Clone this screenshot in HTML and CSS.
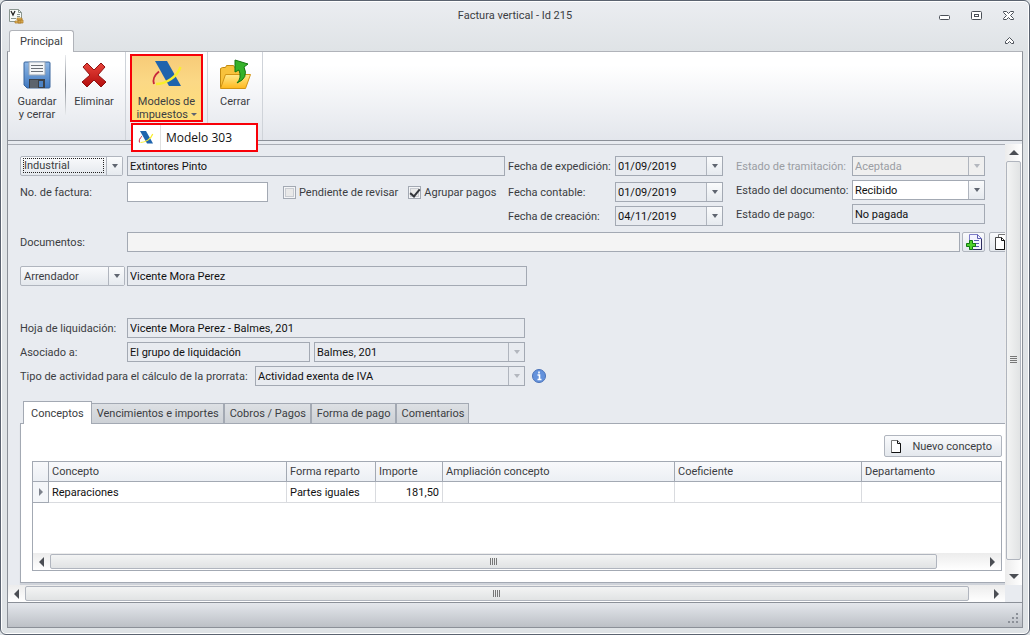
FILE: index.html
```html
<!DOCTYPE html>
<html lang="es">
<head>
  <meta charset="UTF-8" />
  <title>Factura vertical - Id 215</title>
  <link rel="stylesheet" href="styles.css">
</head>
<body>
  <svg class="defs" aria-hidden="true">
    <linearGradient id="gBlue" x1="0" y1="0" x2="0" y2="1"><stop offset="0" stop-color="#8fb8e6"/><stop offset="1" stop-color="#3f78c0"/></linearGradient>
    <linearGradient id="gFolder" x1="0" y1="0" x2="0" y2="1"><stop offset="0" stop-color="#ffe98c"/><stop offset="1" stop-color="#ffb81c"/></linearGradient>
    <linearGradient id="gRed" x1="0" y1="0" x2="0" y2="1"><stop offset="0" stop-color="#e8453c"/><stop offset="1" stop-color="#b30d0d"/></linearGradient>
    <symbol id="aeat" viewBox="0 0 32 32">
      <path d="M8 12.500C3.500 16 1.500 21 3 25" fill="none" stroke="#c8283c" stroke-width="2"/>
      <path d="M4 2h12l14 25H18z" fill="#1f64ad"/>
      <path d="M5 25C15 25 26 18 29.500 8" fill="none" stroke="#f9ee2c" stroke-width="2.400"/>
    </symbol>
    <symbol id="page" viewBox="0 0 10 13">
      <path d="M.5.500h6l3 3v9h-9z" fill="#fff" stroke="#777"/>
      <path d="M6.500.500v3h3v9h-9" fill="none" stroke="#111"/>
    </symbol>
  </svg>

  <div class="window">
    <header class="titlebar">
      <svg class="app-icon" viewBox="0 0 16 16">
        <path d="M1.500 1.500h9l3 3v9h-12z" fill="#f7faf8" stroke="#8a9690"/>
        <path d="M10.500 1.500v3h3M9 6.500h3M9 8.500h3M3 10.500h5" fill="none" stroke="#8a9690"/>
        <path d="M3 3l2 4 2-4" fill="none" stroke="#222" stroke-width="1.300"/>
        <path d="M9 10h5v2H9zM7 13h6v2H7zM10 12h5v3h-5z" fill="#e9bd62" stroke="#a87420" stroke-width=".7"/>
      </svg>
      <h1>Factura vertical - Id 215</h1>
      <div class="window-buttons">
        <button aria-label="Minimizar"><svg viewBox="0 0 13 11"><rect x="1.500" y="5.500" width="10" height="4" rx="1" fill="#fff" stroke="#4b5058"/></svg></button>
        <button aria-label="Maximizar"><svg viewBox="0 0 13 11"><rect x="1.500" y="1.500" width="10" height="8" rx="1" fill="#fff" stroke="#4b5058"/><rect x="4.500" y="4.500" width="4" height="2" fill="#fff" stroke="#4b5058"/></svg></button>
        <button aria-label="Cerrar ventana"><svg viewBox="0 0 13 11"><path d="M1.500 1.500h3l2 2 2-2h3v1L8.500 5.500l3 3v1h-3l-2-2-2 2h-3v-1l3-3-3-3z" fill="#fff" stroke="#4b5058"/></svg></button>
      </div>
    </header>

    <div class="ribbon-tabs">
      <button class="ribbon-tab">Principal</button>
      <button class="collapse" aria-label="Contraer"><svg viewBox="0 0 11 9"><path d="M1.500 5.500l4-4 4 4v2h-2l-2-2-2 2h-2z" fill="#fff" stroke="#4b5058"/></svg></button>
    </div>

    <nav class="ribbon">
      <div class="ribbon-group ribbon-group-edit">
        <button class="ribbon-btn">
          <svg viewBox="0 0 32 32">
            <path d="M4 3h24q1 0 1 1v24q0 1-1 1H6l-3-3V4q0-1 1-1z" fill="url(#gBlue)" stroke="#38659c"/>
            <path d="M8 3h16v13H8z" fill="#f4f6f8" stroke="#9aa6b4"/>
            <path d="M10 6.500h12M10 9.500h12M10 12.500h12" stroke="#6c7178"/>
            <path d="M8 20h16v9H8z" fill="#3a4048"/>
            <path d="M9 21h8v8H9z" fill="#5b636d"/>
            <path d="M18 22h4v6h-4z" fill="#4d83c4"/>
          </svg>
          Guardar<br>y cerrar
        </button>
        <span class="ribbon-sep"></span>
        <button class="ribbon-btn">
          <svg viewBox="0 0 32 32"><path d="M9 4l7 7 7-7 4 4-7 8 8 7-5 5-7-7-7 7-5-5 8-7-7-8z" fill="url(#gRed)" stroke="#8e1212"/></svg>
          Eliminar
        </button>
      </div>
      <div class="ribbon-group ribbon-group-taxes">
        <div class="dropdown">
          <button class="ribbon-btn active" aria-expanded="true">
            <svg viewBox="0 0 32 32"><use href="#aeat"/></svg>
            Modelos de<br>impuestos <i class="caret"></i>
          </button>
          <div class="dropdown-menu">
            <button class="menu-item"><span class="menu-icon"><svg viewBox="0 0 32 32"><use href="#aeat"/></svg></span>Modelo 303</button>
          </div>
        </div>
      </div>
      <div class="ribbon-group">
        <button class="ribbon-btn">
          <svg viewBox="0 0 32 32">
            <path d="M1.500 28.500V9.500l2-1h3l1-2h7l2 3h9v19z" fill="#f8c23c" stroke="#c28a10"/>
            <path d="M1.500 29.500l5-14h25l-5 14z" fill="url(#gFolder)" stroke="#d29414"/>
            <path d="M18 24q5-5 2-13l-4 2V1l13 4-4 3q5 11-7 16z" fill="#35b22a" stroke="#167512"/>
          </svg>
          Cerrar
        </button>
      </div>
    </nav>

    <main class="workspace">
      <div class="form">
        <div class="form-top">
          <div class="col col-main">
            <div class="row">
              <div class="split split-focus"><button class="split-main">Industrial</button><button class="drop" aria-label="Elegir tipo"></button></div>
              <input class="field grow" type="text" value="Extintores Pinto" aria-label="Industrial" readonly>
            </div>
            <div class="row">
              <label class="label-main" for="numFactura">No. de factura:</label>
              <input class="field white invoice-number" type="text" id="numFactura">
              <label class="check check-first"><input type="checkbox">Pendiente de revisar</label>
              <label class="check"><input type="checkbox" checked>Agrupar pagos</label>
            </div>
          </div>
          <div class="col col-dates">
            <div class="row">
              <label for="fExpedicion">Fecha de expedición:</label>
              <div class="combo"><input type="text" id="fExpedicion" value="01/09/2019"><button class="drop" aria-label="Calendario"></button></div>
            </div>
            <div class="row">
              <label for="fContable">Fecha contable:</label>
              <div class="combo"><input type="text" id="fContable" value="01/09/2019"><button class="drop" aria-label="Calendario"></button></div>
            </div>
            <div class="row">
              <label for="fCreacion">Fecha de creación:</label>
              <div class="combo"><input type="text" id="fCreacion" value="04/11/2019"><button class="drop" aria-label="Calendario"></button></div>
            </div>
          </div>
          <div class="col col-status">
            <div class="row off">
              <label for="eTramitacion">Estado de tramitación:</label>
              <div class="combo disabled"><select id="eTramitacion" disabled><option>Aceptada</option></select><span class="drop"></span></div>
            </div>
            <div class="row">
              <label for="eDocumento">Estado del documento:</label>
              <div class="combo white"><select id="eDocumento"><option>Recibido</option></select><span class="drop"></span></div>
            </div>
            <div class="row">
              <label for="ePago">Estado de pago:</label>
              <input class="field grow" type="text" id="ePago" value="No pagada" readonly>
            </div>
          </div>
        </div>

        <div class="row row-docs">
          <label class="label-main" for="documentos">Documentos:</label>
          <input class="field grow pale" type="text" id="documentos">
          <button class="icon-btn" aria-label="Añadir documento">
            <svg viewBox="0 0 16 16">
              <path d="M3.500.500h8l4 4v11h-12z" fill="#f4f4ff" stroke="#7d7dc8"/>
              <path d="M11.500.500v4h4M8 6.500h5M9 9.500h4M9 12.500h4" fill="none" stroke="#5b5bb0"/>
              <path d="M15.500 5v10.500H7" fill="none" stroke="#2c2c5e"/>
              <path d="M3.500 6.500h3v3h3v3h-3v3h-3v-3h-3v-3h3z" fill="#4fd02c" stroke="#127a10"/>
            </svg>
          </button>
          <button class="icon-btn icon-btn-last" aria-label="Copiar documento">
            <svg viewBox="0 0 16 16">
              <path d="M5.500.500h7l3 3v9h-10z" fill="#fff" stroke="#777"/>
              <path d="M2.500 3.500h6l3 3v9h-9z" fill="#fff" stroke="#444"/>
              <path d="M8.500 3.500v3h3v9h-9" fill="none" stroke="#111"/>
            </svg>
          </button>
        </div>

        <div class="row row-landlord">
          <div class="split split-wide"><button class="split-main">Arrendador</button><button class="drop" aria-label="Elegir tipo"></button></div>
          <input class="field landlord" type="text" value="Vicente Mora Perez" aria-label="Arrendador" readonly>
        </div>

        <div class="settlement">
          <div class="row">
            <label class="label-main" for="hoja">Hoja de liquidación:</label>
            <input class="field grow" type="text" id="hoja" value="Vicente Mora Perez - Balmes, 201" readonly>
          </div>
          <div class="row">
            <label class="label-main" for="asociado">Asociado a:</label>
            <input class="field group" type="text" id="asociado" value="El grupo de liquidación" readonly>
            <div class="combo muted"><select aria-label="Finca"><option>Balmes, 201</option></select><span class="drop"></span></div>
          </div>
          <div class="row">
            <label class="label-activity" for="actividad">Tipo de actividad para el cálculo de la prorrata:</label>
            <div class="combo muted"><select id="actividad"><option>Actividad exenta de IVA</option></select><span class="drop"></span></div>
            <svg class="info" viewBox="0 0 14 14"><circle cx="7" cy="7" r="6.500" fill="#6492dc" stroke="#4a72b8"/><path d="M7 2.500v2M5.500 6H7.500v4.500M5.500 10.500h4" fill="none" stroke="#fff" stroke-width="1.600"/></svg>
          </div>
        </div>

        <div class="tabs" role="tablist">
          <button class="tab selected" role="tab">Conceptos</button>
          <button class="tab" role="tab">Vencimientos e importes</button>
          <button class="tab" role="tab">Cobros / Pagos</button>
          <button class="tab" role="tab">Forma de pago</button>
          <button class="tab" role="tab">Comentarios</button>
        </div>
        <section class="panel">
          <button class="new-btn"><svg viewBox="0 0 10 13"><use href="#page"/></svg>Nuevo concepto</button>
          <div class="grid">
            <table class="concepts">
              <colgroup><col class="c-mark"><col class="c-concept"><col class="c-form"><col class="c-amount"><col class="c-ext"><col class="c-coef"><col></colgroup>
              <thead>
                <tr><th></th><th>Concepto</th><th>Forma reparto</th><th>Importe</th><th>Ampliación concepto</th><th>Coeficiente</th><th>Departamento</th></tr>
              </thead>
              <tbody>
                <tr><td class="mark"><i class="arrow right"></i></td><td>Reparaciones</td><td>Partes iguales</td><td class="num">181,50</td><td></td><td></td><td></td></tr>
              </tbody>
            </table>
            <div class="scroll-h">
              <button class="scroll-arrow" aria-label="Izquierda"><i class="arrow left"></i></button>
              <div class="track"><div class="thumb thumb-grid"><i class="grip"></i></div></div>
              <button class="scroll-arrow" aria-label="Derecha"><i class="arrow right"></i></button>
            </div>
          </div>
        </section>
      </div>
      <div class="scroll-v">
        <button class="scroll-arrow" aria-label="Arriba"><i class="arrow up"></i></button>
        <div class="track"><div class="thumb"><i class="grip"></i></div></div>
        <button class="scroll-arrow" aria-label="Abajo"><i class="arrow down"></i></button>
      </div>
      <div class="scroll-h">
        <button class="scroll-arrow" aria-label="Izquierda"><i class="arrow left"></i></button>
        <div class="track"><div class="thumb"><i class="grip"></i></div></div>
        <button class="scroll-arrow" aria-label="Derecha"><i class="arrow right"></i></button>
      </div>
    </main>

    <footer class="statusbar">
      <svg class="resize" viewBox="0 0 12 12"><path d="M8 0h2v2H8zM4 4h2v2H4zM8 4h2v2H8zM0 8h2v2H0zM4 8h2v2H4zM8 8h2v2H8z" fill="#8b9098"/></svg>
    </footer>
  </div>
</body>
</html>
```

FILE: styles.css
```css
* {
  box-sizing: border-box;
}
body {
  margin: 0;
  background-color: #dfe3e6;
  font-family: Tahoma, Roboto, sans-serif;
  font-size: 11px;
  line-height: 13px;
  color: #3b3d42;
}
button,
input,
select {
  font: inherit;
  color: inherit;
  margin: 0;
  padding: 0;
  border: 0;
  border-radius: 0;
  background: none;
  min-width: 0;
}
select {
  appearance: none;
}
svg {
  display: block;
}
.defs {
  position: absolute;
  width: 0;
  height: 0;
}

/* window frame */
.window {
  display: flex;
  flex-direction: column;
  min-height: 100vh;
  padding: 0 6px 6px;
  border: 1px solid #5b6370;
  border-radius: 6px;
  box-shadow: inset 0 0 0 1px #fff;
  background: linear-gradient(#ebedf1, #dfe3e6 50px);
}
.titlebar {
  display: grid;
  grid-template-columns: 90px 1fr 90px;
  align-items: center;
  height: 29px;
}
.titlebar h1 {
  margin: 0;
  font-size: 11px;
  font-weight: normal;
  text-align: center;
}
.app-icon {
  width: 16px;
  height: 16px;
  margin-left: 1px;
}
.window-buttons {
  display: flex;
  justify-content: flex-end;
  gap: 19px;
  padding-right: 8px;
}
.window-buttons svg {
  width: 13px;
  height: 11px;
}
.ribbon-tabs {
  display: flex;
  justify-content: space-between;
  padding: 0 8px 0 2px;
}
.ribbon-tab {
  position: relative;
  z-index: 1;
  height: 22px;
  margin-bottom: -1px;
  padding: 0 10px;
  border: 1px solid #b0b3b9;
  border-bottom: 0;
  border-radius: 3px 3px 0 0;
  background-color: #fff;
}
.collapse svg {
  width: 11px;
  height: 9px;
}

/* ribbon */
.ribbon {
  display: flex;
  height: 90px;
  border: 1px solid #8b9098;
  border-top-color: #b0b3b9;
  background: linear-gradient(#fff 15%, #e3e6ec);
}
.ribbon-group {
  display: flex;
  align-items: flex-start;
  padding-top: 3px;
  border-right: 1px solid #cfd3d9;
}
.ribbon-group-edit {
  padding-left: 2px;
  padding-right: 4px;
}
.ribbon-group-taxes {
  padding: 2px 4px;
}
.ribbon-btn {
  width: 54px;
  padding: 4px 0 0;
  text-align: center;
}
.ribbon-btn svg {
  width: 32px;
  height: 32px;
  margin: 0 auto 4px;
}
.ribbon-sep {
  width: 1px;
  height: 60px;
  margin: 0 1px;
  background: linear-gradient(#e9ebee, #7d828a, #e9ebee);
}
.dropdown {
  position: relative;
}
.ribbon-btn.active {
  width: 73px;
  height: 68px;
  padding: 3px 0 0;
  border: 2px solid #f80008;
  background: linear-gradient(#f7cb78, #fbd885 40%, #ffe07a);
}
.caret {
  display: inline-block;
  margin-bottom: 2px;
  border: 3px solid transparent;
  border-top-color: #5f6570;
  border-bottom: 0;
}
.dropdown-menu {
  position: absolute;
  z-index: 2;
  top: 69px;
  left: 1px;
  width: 127px;
  border: 2px solid #f80008;
  background-color: #fff;
}
.menu-item {
  display: flex;
  align-items: center;
  width: 100%;
  height: 25px;
  font-family: "Segoe UI", "Open Sans", sans-serif;
  font-size: 12px;
  color: #111;
}
.menu-icon {
  display: flex;
  align-items: center;
  height: 25px;
  width: 28px;
  margin-right: 5px;
  padding-left: 5px;
  border-right: 1px solid #e0e0e0;
}
.menu-icon svg {
  width: 16px;
  height: 16px;
}

/* workspace */
.workspace {
  display: grid;
  grid-template-columns: 1fr 17px;
  grid-template-rows: 1fr 17px;
  flex: 1;
  padding-top: 3px;
  border: 1px solid #8b9098;
  border-top: 0;
  border-bottom: 0;
  background-color: #e8ebf0;
}
.form {
  display: flex;
  flex-direction: column;
  min-width: 0;
  overflow: hidden;
  padding: 11px 0 2px 12px;
  border-top: 1px solid #a9adb5;
}
.form-top {
  display: flex;
  padding-right: 20px;
}
.col,
.settlement {
  display: flex;
  flex-direction: column;
  gap: 4px;
}
.col-main {
  flex: 1;
  gap: 6px;
  min-width: 0;
}
.col-dates {
  width: 215px;
  margin: 0 13px 0 3px;
}
.col-dates .row:first-child {
  margin-bottom: 2px;
}
.col-status {
  width: 249px;
}
.row {
  display: flex;
  align-items: center;
}
.label-main,
.col-dates .row > label {
  flex: 0 0 107px;
}
.col-status .row > label {
  flex: 0 0 116px;
}
.label-activity {
  flex: 0 0 235px;
}
.field,
.combo {
  height: 20px;
  border: 1px solid #a3a9b3;
  color: #111;
}
.field {
  padding: 0 2px;
}
.grow {
  flex: 1;
}
.white {
  background-color: #fff;
}
.pale {
  background-color: #f4f4f4;
}
.combo {
  display: flex;
  flex: 1;
  min-width: 0;
}
.combo input,
.combo select {
  flex: 1;
  padding: 0 2px;
}
.drop {
  display: flex;
  flex: 0 0 16px;
  align-items: center;
  justify-content: center;
  border-left: 1px solid #b0b5be;
  background: linear-gradient(#fafbfc, #e6eaef);
}
.drop::before {
  content: "";
  border: 3px solid transparent;
  border-top: 4px solid #5f6570;
  border-bottom: 0;
}
.muted .drop,
.disabled .drop {
  background: none;
}
.muted .drop::before,
.disabled .drop::before {
  border-top-color: #b3b7be;
}
.off,
.disabled,
.disabled select {
  color: #9a9da3;
  opacity: 1;
}
.disabled {
  background-color: #efefef;
}
.split {
  display: flex;
  width: 103px;
  height: 20px;
  margin-right: 4px;
  border: 1px solid #b0b5be;
  border-radius: 2px;
  background: linear-gradient(#f9fafc, #e4e8ed);
}
.split-wide {
  width: 105px;
  margin-right: 2px;
}
.split-main {
  flex: 1;
  padding-left: 3px;
  text-align: left;
}
.split-focus .split-main {
  margin: 1px 2px 2px;
  padding-left: 0;
  border: 1px dotted #222;
}
.invoice-number {
  width: 141px;
}
.check {
  display: flex;
  align-items: center;
  gap: 3px;
  margin-left: 10px;
}
.check-first {
  margin-left: 15px;
}
.check input {
  appearance: none;
  display: grid;
  place-items: center;
  width: 13px;
  height: 13px;
  border: 1px solid #a3a9b3;
  box-shadow: inset 0 0 0 1px #f4f5f7, inset 0 0 0 2px #c9ccd2;
  background-color: #e9e9e9;
}
.check input:checked::before {
  content: "";
  width: 4px;
  height: 8px;
  border: solid #33363b;
  border-width: 0 2px 2px 0;
  transform: rotate(40deg);
}
.row-docs {
  margin: 6px -7px 0 0;
}
.icon-btn {
  width: 23px;
  height: 20px;
  margin-left: 2px;
  padding-left: 3px;
  border: 1px solid #b0b5be;
  border-radius: 2px;
  background: linear-gradient(#f9fafc, #e4e8ed);
}
.icon-btn-last {
  margin-left: 4px;
}
.icon-btn svg {
  width: 16px;
  height: 16px;
}
.row-landlord {
  margin-top: 14px;
}
.landlord {
  width: 400px;
}
.settlement {
  width: 505px;
  margin-top: 32px;
}
.group {
  width: 183px;
  margin-right: 4px;
}
.info {
  width: 14px;
  height: 14px;
  margin: 0 -21px 0 7px;
}

/* tabs and grid */
.tabs {
  display: flex;
  align-items: flex-end;
  margin-top: 15px;
  padding-left: 3px;
}
.tab {
  height: 20px;
  padding: 0 5px;
  border: 1px solid #a3a9b3;
  border-bottom: 0;
  background: linear-gradient(#dde0e4, #cdd1d6);
}
.tab + .tab {
  padding: 0 4px 0 5px;
}
.tab.selected {
  position: relative;
  height: 23px;
  margin: 0 -1px -1px 0;
  padding: 0 7px;
  background: #fff;
}
.panel {
  display: flex;
  flex: 1;
  flex-direction: column;
  padding: 11px 3px 11px 11px;
  border: 1px solid #a3a9b3;
  border-right: 0;
  box-shadow: 0 2px 1px #cfd3da;
  background-color: #fff;
}
.new-btn {
  display: flex;
  align-items: center;
  align-self: flex-end;
  gap: 11px;
  height: 22px;
  margin-bottom: 4px;
  padding: 0 9px 0 6px;
  border: 1px solid #b0b5be;
  border-radius: 2px;
  background: linear-gradient(#f9fafc, #e4e8ed);
}
.new-btn svg {
  width: 10px;
  height: 13px;
}
.grid {
  display: flex;
  flex: 1;
  flex-direction: column;
  justify-content: space-between;
  border: 1px solid #a3a9b3;
}
.concepts {
  width: 100%;
  table-layout: fixed;
  border-spacing: 0;
}
.c-mark { width: 16px; }
.c-concept { width: 238px; }
.c-form { width: 89px; }
.c-amount { width: 67px; }
.c-ext { width: 232px; }
.c-coef { width: 187px; }
.concepts th,
.concepts td {
  height: 21px;
  padding: 0 3px;
  border: solid #d9dbdf;
  border-width: 0 1px 1px 0;
  text-align: left;
  color: #111;
}
.concepts th {
  height: 20px;
  border-color: #a3a9b3;
  background: linear-gradient(#f8f9fb, #eceff4);
  font-weight: normal;
  color: #3b3d42;
}
.concepts th:last-child,
.concepts td:last-child {
  border-right: 0;
}
.concepts .mark {
  padding: 0 0 0 6px;
  border-color: #a3a9b3;
  background-color: #f4f6f9;
}
.concepts .num {
  text-align: right;
}

/* scrollbars */
.scroll-h,
.scroll-v {
  display: flex;
  background: linear-gradient(#ececec, #fff);
}
.scroll-h {
  height: 17px;
}
.scroll-v {
  flex-direction: column;
  background: linear-gradient(90deg, #ececec, #fff);
}
.scroll-arrow {
  display: flex;
  align-items: center;
  justify-content: center;
  flex: 0 0 17px;
}
.track {
  flex: 1;
  padding: 1px 0;
}
.scroll-v .track {
  padding: 0 1px;
}
.thumb {
  display: flex;
  align-items: center;
  justify-content: center;
  width: 98%;
  height: 15px;
  border: 1px solid #b0b5be;
  border-radius: 2px;
  background: linear-gradient(#f3f4f4, #e1e3e4);
}
.thumb-grid {
  width: 95%;
}
.scroll-v .thumb {
  width: 15px;
  height: 98%;
  background: linear-gradient(90deg, #f3f4f4, #e1e3e4);
}
.grip {
  width: 8px;
  height: 7px;
  background: repeating-linear-gradient(90deg, #777 0 1px, transparent 1px 2px);
}
.scroll-v .grip {
  width: 7px;
  height: 8px;
  background: repeating-linear-gradient(#777 0 1px, transparent 1px 2px);
}
.arrow {
  display: block;
  width: 0;
  border: 5px solid transparent;
}
.arrow.left {
  border-right-color: #4b4e54;
  border-left: 0;
}
.arrow.right {
  border-left-color: #4b4e54;
  border-right: 0;
}
.arrow.up {
  border-bottom-color: #4b4e54;
  border-top: 0;
}
.arrow.down {
  border-top-color: #4b4e54;
  border-bottom: 0;
}
.concepts .mark .arrow {
  border-width: 4px 0 4px 4px;
  border-left-color: #7d828c;
}

.statusbar {
  display: flex;
  align-items: flex-end;
  justify-content: flex-end;
  height: 26px;
  padding: 2px;
  border: 1px solid #8b9098;
  background: linear-gradient(#e4e7ec, #bcc0c6);
}
.resize {
  width: 12px;
  height: 12px;
}
```
